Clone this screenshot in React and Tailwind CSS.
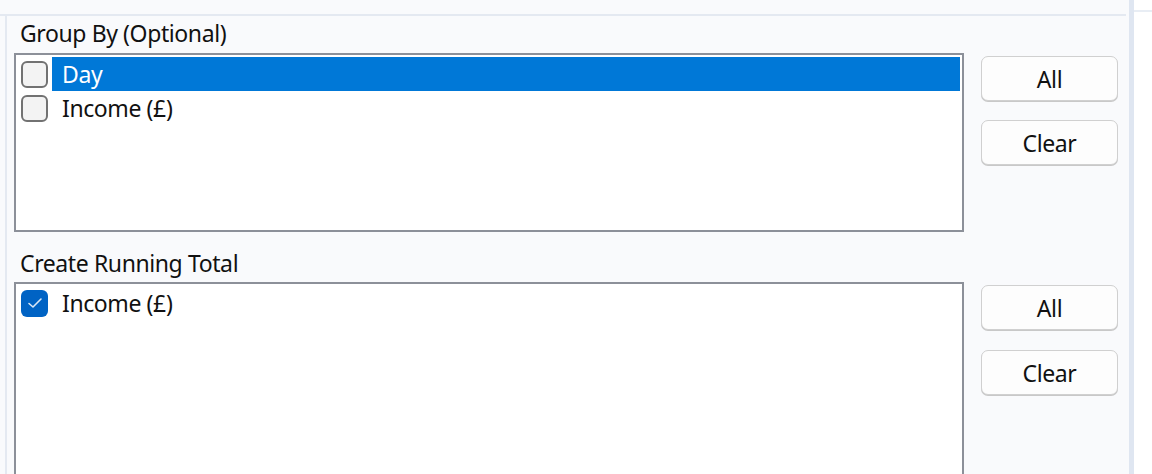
import React from "react";

const font = { fontFamily: '"Noto Sans", "Open Sans", sans-serif' };

function Box({ checked }) {
  if (checked) {
    return (
      <div className="w-[27px] h-[27px] rounded-[6px] bg-[#0063c4] flex items-center justify-center shrink-0">
        <svg width="16" height="12" viewBox="0 0 16 12" fill="none">
          <path d="M2 6.5 L6 10 L14 2" stroke="#dbe8f6" strokeWidth="1.6" strokeLinecap="round" strokeLinejoin="round" />
        </svg>
      </div>
    );
  }
  return <div className="w-[27px] h-[27px] rounded-[6px] border-2 border-[#727272] bg-[#f3f3f3] shrink-0" />;
}

function Row({ label, selected, checked }) {
  return (
    <div className="flex items-center h-[34px] shrink-0">
      <div className="w-[36px] pl-[5px] flex items-center">
        <Box checked={checked} />
      </div>
      <div
        className={
          "flex-1 h-full flex items-center pl-[10px] mr-[2px] " +
          (selected ? "bg-[#0078d7] text-white" : "text-[#111]")
        }
      >
        {label}
      </div>
    </div>
  );
}

function Btn({ children }) {
  return (
    <div className="w-[137px] h-[45px] shrink-0 rounded-[7px] border border-[#d0d0d0] bg-[#fdfdfd] shadow-[0_1px_0_#c8c8c8] flex items-center justify-center text-[#111]">
      {children}
    </div>
  );
}

export default function App() {
  return (
    <div className="flex w-[1152px] h-[474px] overflow-hidden bg-[#f9fafc] text-[23px] leading-[28px] tracking-[-0.4px]" style={font}>
      <div className="w-[1129px] flex flex-col shrink-0">
        <div className="h-[16px] border-b-2 border-[#e4e9f1] mr-[3px] shrink-0" />
        <div className="flex flex-1 min-h-0 overflow-hidden">
          <div className="w-[5px] shrink-0" />
          <div className="w-[2px] bg-[#e4e9f1] shrink-0" />
          <div className="flex-1 flex flex-col pl-[7px] pt-[3px]">
            <div className="text-[#111] pl-[6px] h-[34px] shrink-0">Group By (Optional)</div>
            <div className="flex gap-[17px] shrink-0">
              <div className="w-[950px] h-[179px] shrink-0 border-2 border-[#8c9099] bg-white pt-[2px]">
                <Row label="Day" selected />
                <Row label="Income (£)" />
              </div>
              <div className="flex flex-col gap-[19px] pt-[3px]">
                <Btn>All</Btn>
                <Btn>Clear</Btn>
              </div>
            </div>
            <div className="text-[#111] pl-[6px] pt-[17px] h-[50px] shrink-0">Create Running Total</div>
            <div className="flex gap-[17px] shrink-0">
              <div className="w-[950px] h-[260px] shrink-0 border-2 border-[#8c9099] bg-white pt-[2px]">
                <Row label="Income (£)" checked />
              </div>
              <div className="flex flex-col gap-[20px] pt-[3px]">
                <Btn>All</Btn>
                <Btn>Clear</Btn>
              </div>
            </div>
          </div>
        </div>
      </div>
      <div className="w-[5px] bg-[#dfe6f1] shrink-0" />
      <div className="flex-1 bg-white">
        <div className="h-[12px] border-b-2 border-[#e8edf4]" />
      </div>
    </div>
  );
}
